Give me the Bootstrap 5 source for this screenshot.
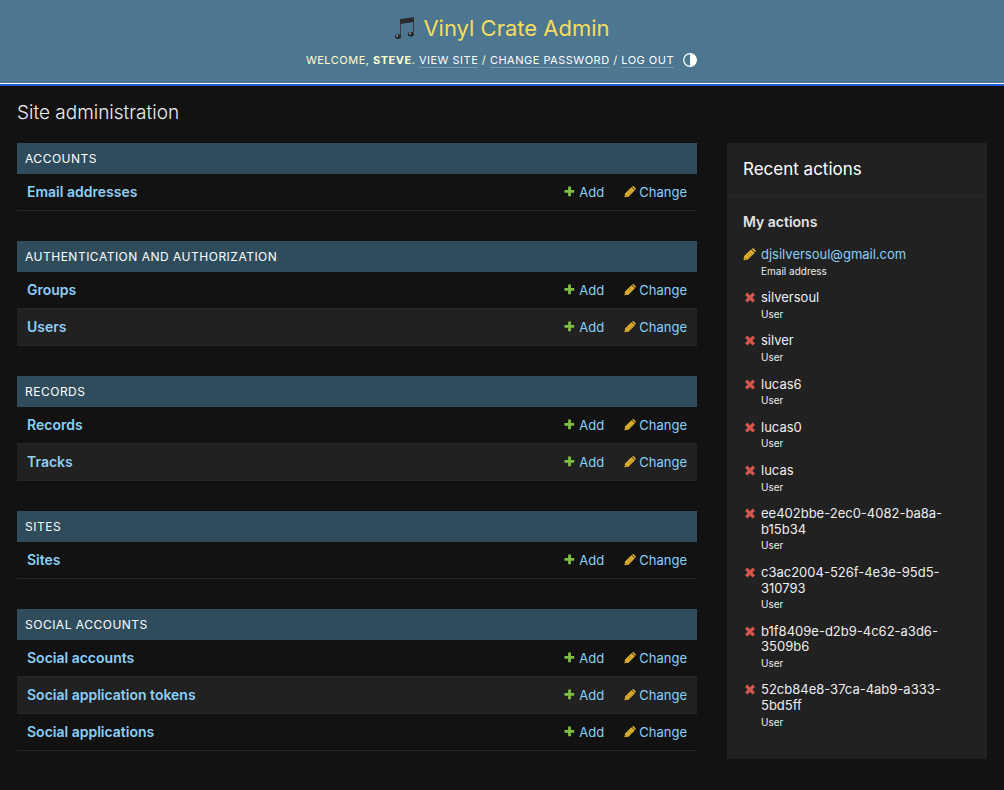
<!DOCTYPE html>
<html lang="en" data-bs-theme="dark">
<head>
<meta charset="utf-8">
<meta name="viewport" content="width=device-width, initial-scale=1">
<title>Site administration | Vinyl Crate Admin</title>
<link href="https://cdn.jsdelivr.net/npm/bootstrap@5.3.0/dist/css/bootstrap.min.css" rel="stylesheet">
<style>
  body { background: #121212; color: #eee; font-family: Inter, "Liberation Sans", sans-serif; font-size: 13px; line-height: 20px; }
  a { color: #8bd0f7; text-decoration: none; }
  .site-header { background: #4d7690; border-bottom: 2px solid #1f5fcb; box-shadow: inset 0 -1px #fff; color: #ffc; padding: 12px 40px 16px; }
  .brand { color: #f5dd5d; font-size: 22px; font-weight: 400; line-height: 32px; }
  .user-tools { font-size: 11px; letter-spacing: .5px; line-height: 16px; margin-top: 8px; }
  .user-tools a { color: #fff; border-bottom: 1px solid rgba(255,255,255,.25); }
  .content-area { padding: 14px 17px 30px; }
  .page-title { font-size: 19px; font-weight: 300; line-height: 26px; margin-bottom: 17px; color: #eee; }
  .layout { gap: 30px; }
  .modules { min-width: 0; }
  .app-table { margin-bottom: 30px; border-collapse: separate; border-spacing: 0; }
  .app-table caption { caption-side: top; background: #2f4c5d; color: #fff; font-size: 12px; letter-spacing: .5px; line-height: 15px; padding: 8px; }
  .app-table th, .app-table td { height: 37px; padding: 8px 10px; border-bottom: 1px solid #272727; line-height: 20px; vertical-align: middle; white-space: nowrap; }
  .app-table tr:nth-child(even) { background: #212121; }
  .app-table th { font-size: 14px; font-weight: 600; }
  .app-table .col-add { width: 60px; }
  .app-table .col-change { width: 82px; }
  .app-table svg { margin-right: 3px; vertical-align: -1px; }
  .recent { background: #212121; width: 260px; padding-bottom: 24px; }
  .recent h2 { font-size: 17px; font-weight: 400; line-height: 21px; padding: 16px; margin: 0; border-bottom: 1px solid #272727; }
  .recent h3 { font-size: 14px; font-weight: 600; line-height: 18px; padding: 16px 16px 10px; margin: 0; color: #e4e4e4; }
  .recent ul { padding: 0 16px; margin: 0; line-height: 1.2; }
  .recent li { padding: 6px 24px 6px 0; gap: 5px; }
  .recent li svg { margin-top: 1px; }
  .recent small { font-size: 10px; }
</style>
</head>
<body>
<svg class="d-none" aria-hidden="true">
  <symbol id="add" viewBox="0 0 13 13"><path fill="#7fbf45" d="M4.500 .5h3v3.800H11v3H7.500V11h-3V7.300H.500v-3h4z"/></symbol>
  <symbol id="edit" viewBox="0 0 13 13"><path fill="#e8b730" d="M.5 12.300l.700-4.300L8 1.400l3.600 3.600L4.800 11.600zM8.700 .900l.600-.500q.600-.500 1.200 0l2 2q.600.600 0 1.200l-.600.700z"/><path d="M3.300 8.800l5-5M4.800 10l5-5" stroke="#806517" stroke-width=".6" fill="none"/><path d="M1.600 9.800l1.500 1.500" stroke="#5c4a16" stroke-width="1" fill="none"/></symbol>
  <symbol id="delete" viewBox="0 0 13 13"><path fill="#d4574d" d="M2 3.900l2.300-2.300L7 4.300l2.700-2.700L12 3.900 9.300 6.600 12 9.300l-2.300 2.300L7 8.900l-2.700 2.700L2 9.300l2.700-2.700z"/></symbol>
</svg>

<header class="site-header text-center">
  <h1 class="brand d-flex justify-content-center align-items-center mb-0">
    <svg class="me-2" width="21" height="26" viewBox="0 0 21 26" aria-hidden="true">
      <path d="M6 4.200L20 2.200v16h-1V7L7 8.700v12H6z" fill="#3b3c42"/>
      <path d="M6 4.200L20 2.200v4.600L6 8.800z" fill="#2a292e"/>
      <ellipse cx="4" cy="21.500" rx="3" ry="2.300" fill="#24252a"/><ellipse cx="16.800" cy="19.300" rx="3" ry="2.300" fill="#24252a"/>
      <circle cx="3.200" cy="20.800" r="1" fill="#9aa3aa"/><circle cx="16" cy="18.600" r="1" fill="#9aa3aa"/>
    </svg>
    <span>Vinyl Crate Admin</span>
  </h1>
  <div class="user-tools d-flex justify-content-center align-items-center text-uppercase">
    <div>Welcome, <strong>Steve</strong>. <a href="#">View site</a> / <a href="#">Change password</a> / <a href="#">Log out</a></div>
    <button type="button" class="btn p-0 border-0 ms-2 d-flex" aria-label="Toggle theme">
      <svg width="16" height="16" viewBox="0 0 16 16"><circle cx="8" cy="8" r="6.300" fill="none" stroke="#fff" stroke-width="1.200"/><path d="M8 1.500a6.500 6.500 0 0 1 0 13z" fill="#fff"/></svg>
    </button>
  </div>
</header>

<main class="content-area">
  <h1 class="page-title">Site administration</h1>
  <div class="layout d-flex align-items-start">
    <div class="modules flex-grow-1">
      <table class="app-table w-100"><caption>ACCOUNTS</caption><tbody>
        <tr><th scope="row"><a href="#">Email addresses</a></th><td class="col-add"><a href="#">Add</a></td><td class="col-change"><a href="#">Change</a></td></tr>
      </tbody></table>
      <table class="app-table w-100"><caption>AUTHENTICATION AND AUTHORIZATION</caption><tbody>
        <tr><th scope="row"><a href="#">Groups</a></th><td class="col-add"><a href="#">Add</a></td><td class="col-change"><a href="#">Change</a></td></tr>
        <tr><th scope="row"><a href="#">Users</a></th><td class="col-add"><a href="#">Add</a></td><td class="col-change"><a href="#">Change</a></td></tr>
      </tbody></table>
      <table class="app-table w-100"><caption>RECORDS</caption><tbody>
        <tr><th scope="row"><a href="#">Records</a></th><td class="col-add"><a href="#">Add</a></td><td class="col-change"><a href="#">Change</a></td></tr>
        <tr><th scope="row"><a href="#">Tracks</a></th><td class="col-add"><a href="#">Add</a></td><td class="col-change"><a href="#">Change</a></td></tr>
      </tbody></table>
      <table class="app-table w-100"><caption>SITES</caption><tbody>
        <tr><th scope="row"><a href="#">Sites</a></th><td class="col-add"><a href="#">Add</a></td><td class="col-change"><a href="#">Change</a></td></tr>
      </tbody></table>
      <table class="app-table w-100 mb-0"><caption>SOCIAL ACCOUNTS</caption><tbody>
        <tr><th scope="row"><a href="#">Social accounts</a></th><td class="col-add"><a href="#">Add</a></td><td class="col-change"><a href="#">Change</a></td></tr>
        <tr><th scope="row"><a href="#">Social application tokens</a></th><td class="col-add"><a href="#">Add</a></td><td class="col-change"><a href="#">Change</a></td></tr>
        <tr><th scope="row"><a href="#">Social applications</a></th><td class="col-add"><a href="#">Add</a></td><td class="col-change"><a href="#">Change</a></td></tr>
      </tbody></table>
    </div>
    <aside class="recent flex-shrink-0">
      <h2>Recent actions</h2>
      <h3>My actions</h3>
      <ul class="list-unstyled">
        <li class="d-flex" data-icon="edit"><div><a href="#">djsilversoul@gmail.com</a><br><small>Email address</small></div></li>
        <li class="d-flex"><div>silversoul<br><small>User</small></div></li>
        <li class="d-flex"><div>silver<br><small>User</small></div></li>
        <li class="d-flex"><div>lucas6<br><small>User</small></div></li>
        <li class="d-flex"><div>lucas0<br><small>User</small></div></li>
        <li class="d-flex"><div>lucas<br><small>User</small></div></li>
        <li class="d-flex"><div>ee402bbe-2ec0-4082-ba8a-b15b34<br><small>User</small></div></li>
        <li class="d-flex"><div>c3ac2004-526f-4e3e-95d5-310793<br><small>User</small></div></li>
        <li class="d-flex"><div>b1f8409e-d2b9-4c62-a3d6-3509b6<br><small>User</small></div></li>
        <li class="d-flex"><div>52cb84e8-37ca-4ab9-a333-5bd5ff<br><small>User</small></div></li>
      </ul>
    </aside>
  </div>
</main>
<script src="https://cdn.jsdelivr.net/npm/bootstrap@5.3.0/dist/js/bootstrap.bundle.min.js"></script>
<script>
  // Prefix every action link and log entry with its icon.
  const icon = (name, size) => `<svg class="flex-shrink-0" width="${size}" height="${size}" aria-hidden="true"><use href="#${name}"/></svg>`;
  document.querySelectorAll('.col-add a').forEach(a => a.insertAdjacentHTML('afterbegin', icon('add', 12)));
  document.querySelectorAll('.col-change a').forEach(a => a.insertAdjacentHTML('afterbegin', icon('edit', 12)));
  document.querySelectorAll('.recent li').forEach(li => li.insertAdjacentHTML('afterbegin', icon(li.dataset.icon || 'delete', 13)));
</script>
</body>
</html>
